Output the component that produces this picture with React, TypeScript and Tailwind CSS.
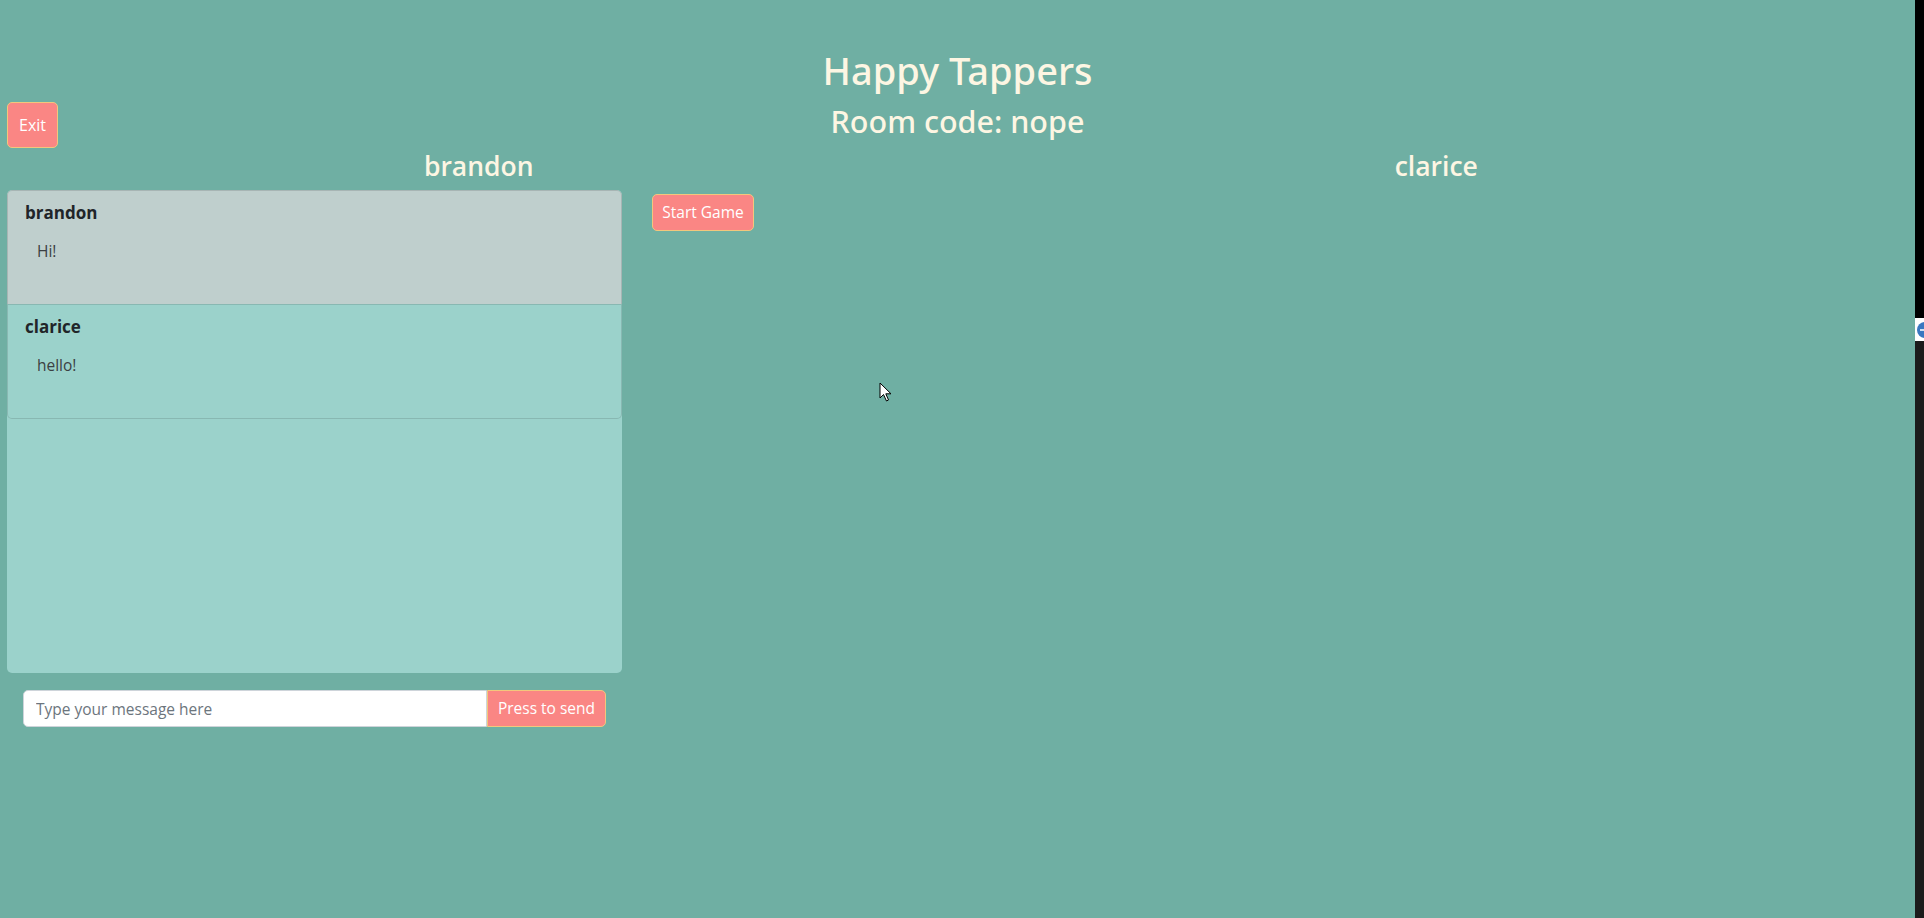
import React, { useState } from "react";

type Message = { key: string; user: string; text: string; own: boolean };

const messages: Message[] = [
  { key: "m1", user: "brandon", text: "Hi!", own: true },
  { key: "m2", user: "clarice", text: "hello!", own: false },
];

const font = "font-['Open_Sans','Noto_Sans',sans-serif]";

const App: React.FC = () => {
  const [draft, setDraft] = useState("");

  return (
    <div className={`flex min-h-screen w-full ${font}`}>
      <div className="relative flex-1 bg-[#6fafa3] pt-[46px]">
        <h1 className="text-center font-['Noto_Sans',sans-serif] text-[38px] leading-[48px] font-medium text-[#fdf6e3]">
          Happy Tappers
        </h1>

        <div className="mt-[8px] grid grid-cols-[1fr_auto_1fr] items-start">
          <div className="pl-[7px]">
            <button className="h-[46px] w-[51px] rounded-[5px] border border-[#f3c77c] bg-[#fa8684] text-[16px] text-white">
              Exit
            </button>
          </div>
          <h2 className="mt-[1px] font-['Noto_Sans',sans-serif] text-[30.5px] leading-[36px] font-medium text-[#fdf6e3]">
            Room code: nope
          </h2>
          <div />
        </div>

        <div className="grid grid-cols-2">
          <h4 className="text-center text-[26.5px] leading-[36px] font-semibold text-[#fdf6e3]">
            brandon
          </h4>
          <h4 className="text-center text-[26.5px] leading-[36px] font-semibold text-[#fdf6e3]">
            clarice
          </h4>
        </div>

        <div className="mt-[6px] flex items-start pl-[7px]">
          <div className="flex w-[615px] flex-col">
            <div className="h-[483px] overflow-hidden rounded-[5px] bg-[#9bd2cb]">
              {messages.map((m, i) => (
                <div
                  key={m.key}
                  className={`h-[115px] border border-black/[0.12] px-[17px] pt-[11px] ${
                    m.own ? "bg-[#bfcfcd]" : "bg-[#9bd2cb]"
                  } ${i === 0 ? "rounded-t-[5px]" : "-mt-px"} ${
                    i === messages.length - 1 ? "rounded-b-[5px]" : ""
                  }`}
                >
                  <div className="text-[17px] leading-[22px] font-bold text-[#212529]">
                    {m.user}
                  </div>
                  <p className="mt-[15px] ml-[12px] text-[15.5px] leading-[24px] text-[#3b4043]">
                    {m.text}
                  </p>
                </div>
              ))}
            </div>

            <div className="mx-[16px] mt-[17px] flex h-[37px]">
              <input
                value={draft}
                onChange={(e) => setDraft(e.target.value)}
                placeholder="Type your message here"
                className="h-full flex-1 rounded-l-[5px] border border-[#ced4da] bg-white px-[12px] text-[15.5px] text-[#495057] outline-none placeholder:text-[#6c757d]"
              />
              <button className="h-full w-[119px] rounded-r-[5px] border border-[#f3c77c] bg-[#fa8684] text-[15.5px] text-white">
                Press to send
              </button>
            </div>
          </div>

          <button className="mt-[4px] ml-[30px] h-[37px] w-[102px] rounded-[5px] border border-[#f3c77c] bg-[#fa8684] text-[15.5px] text-white">
            Start Game
          </button>
        </div>

        {/* mouse pointer caught in the screenshot */}
        <svg
          className="pointer-events-none absolute left-[879px] top-[382px]"
          width="14"
          height="21"
          viewBox="0 0 14 21"
        >
          <path
            d="M1 1 L1 16 L4.5 12.5 L7.5 19 L9.5 18 L6.8 11.8 L12 11.8 Z"
            fill="#fff"
            stroke="#000"
            strokeWidth="1"
            strokeLinejoin="round"
          />
        </svg>
      </div>

      <div className="flex w-[9px] flex-col">
        <div className="h-[318px] bg-black" />
        <div className="flex h-[23px] items-center bg-white pl-[2px]">
          <div className="flex h-[16px] w-[16px] shrink-0 items-center rounded-full bg-[#3a77c0] pl-[3px]">
            <div className="h-[2px] w-[5px] bg-[#cfe0f2]" />
          </div>
        </div>
        <div className="flex-1 bg-[#1b1b1b]" />
      </div>
    </div>
  );
};

export default App;
